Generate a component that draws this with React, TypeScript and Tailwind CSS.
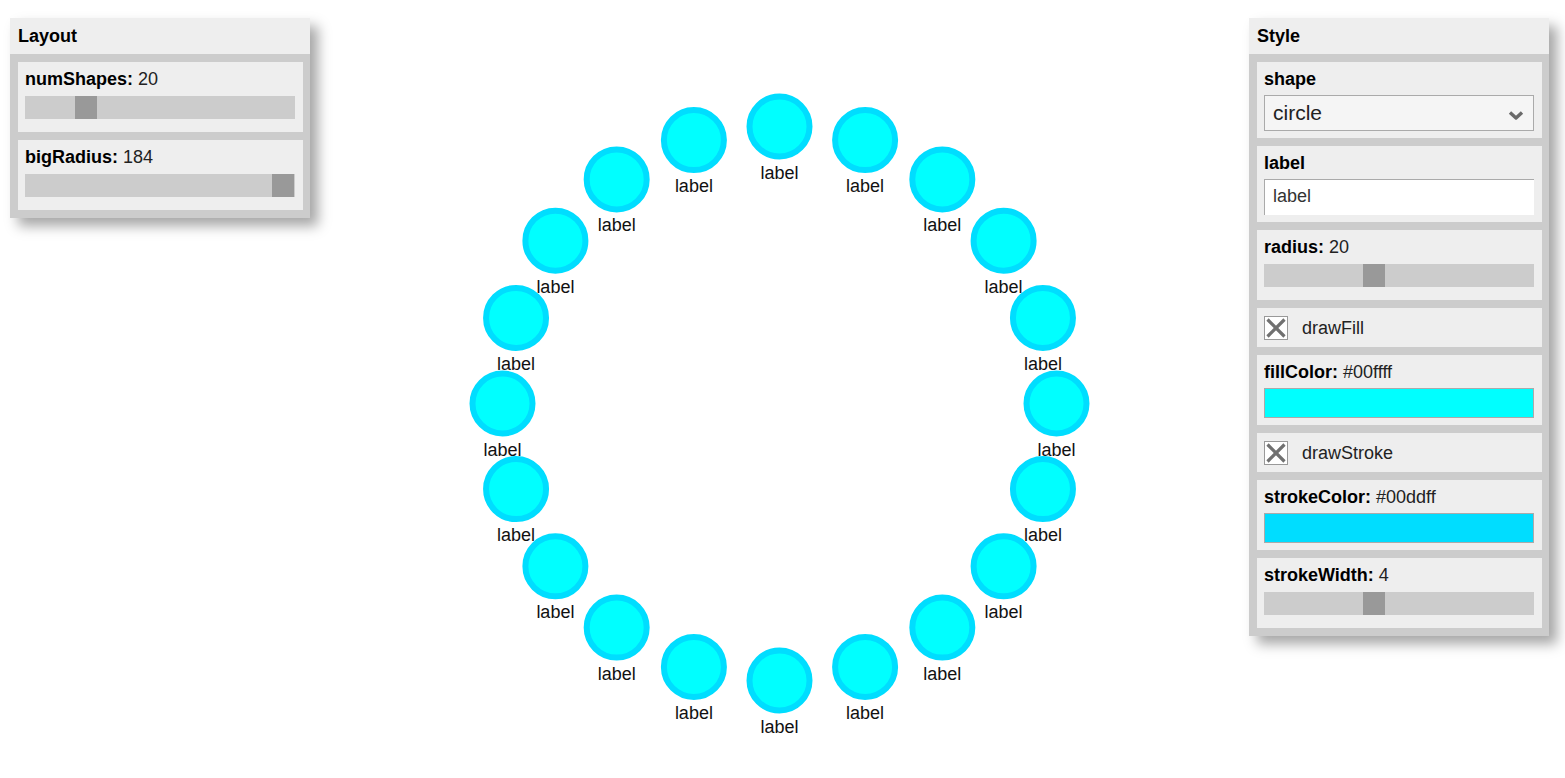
import { useState, type ReactNode } from "react";

const SCALE = 1.5;
const CENTER_X = 330.5;
const CENTER_Y = 385.5;
const LABEL_GAP = 22;

function Panel({ title, children }: { title: string; children: ReactNode }) {
  return (
    <section className="w-[300px] shrink-0 bg-[#cccccc] shadow-[8px_8px_12px_rgba(0,0,0,0.35)]">
      <h2 className="h-9 bg-[#eeeeee] px-2 text-lg leading-9 font-bold">{title}</h2>
      <div className="flex flex-col gap-2 py-2 pr-[7px] pl-2">{children}</div>
    </section>
  );
}

function Field({ id, name, value, children }: { id: string; name: string; value?: string; children: ReactNode }) {
  return (
    <div className="flex flex-col bg-[#eeeeee] pt-1.5 pr-2 pb-[7px] pl-[7px]">
      <label htmlFor={id} className="mb-[5px] block text-lg leading-[22px]">
        <b>{value === undefined ? name : name + ":"}</b>
        {value !== undefined && <span className="text-[#222222]"> {value}</span>}
      </label>
      {children}
    </div>
  );
}

interface RangeProps {
  name: string;
  value: number;
  max: number;
  onChange: (value: number) => void;
}

function RangeField({ name, value, max, onChange }: RangeProps) {
  return (
    <Field id={name} name={name} value={String(value)}>
      <input
        id={name}
        type="range"
        min={0}
        max={max}
        value={value}
        onChange={(e) => onChange(Number(e.target.value))}
        className="mt-px mb-1.5 block h-[23px] w-full appearance-none bg-[#cccccc] [&::-webkit-slider-thumb]:h-[23px] [&::-webkit-slider-thumb]:w-[22px] [&::-webkit-slider-thumb]:appearance-none [&::-webkit-slider-thumb]:bg-[#999999]"
      />
    </Field>
  );
}

interface ColorProps {
  name: string;
  value: string;
  onChange: (value: string) => void;
}

function ColorField({ name, value, onChange }: ColorProps) {
  return (
    <Field id={name} name={name} value={value}>
      <input
        id={name}
        type="color"
        value={value}
        onChange={(e) => onChange(e.target.value)}
        className="block h-[30px] w-full appearance-none border border-[#aaaaaa] p-0 [&::-webkit-color-swatch]:rounded-none [&::-webkit-color-swatch]:border-0 [&::-webkit-color-swatch-wrapper]:p-0"
      />
    </Field>
  );
}

interface CheckProps {
  name: string;
  checked: boolean;
  onChange: (checked: boolean) => void;
}

function CheckField({ name, checked, onChange }: CheckProps) {
  return (
    <label className="flex h-[39px] items-center bg-[#eeeeee] px-[7px] text-lg text-[#222222]">
      <span className="grid">
        <input
          type="checkbox"
          checked={checked}
          onChange={(e) => onChange(e.target.checked)}
          className="col-start-1 row-start-1 size-6 appearance-none border border-[#999999] bg-white"
        />
        {checked && (
          <svg viewBox="0 0 24 24" className="pointer-events-none col-start-1 row-start-1 size-6" aria-hidden="true">
            <path d="M3.5 3.5 20.5 20.5M20.5 3.5 3.5 20.5" stroke="#707070" strokeWidth="3.2" fill="none" />
          </svg>
        )}
      </span>
      <span className="ml-3.5">{name}</span>
    </label>
  );
}

export default function App() {
  const [numShapes, setNumShapes] = useState(20);
  const [bigRadius, setBigRadius] = useState(184);
  const [shape, setShape] = useState("circle");
  const [label, setLabel] = useState("label");
  const [radius, setRadius] = useState(20);
  const [drawFill, setDrawFill] = useState(true);
  const [fillColor, setFillColor] = useState("#00ffff");
  const [drawStroke, setDrawStroke] = useState(true);
  const [strokeColor, setStrokeColor] = useState("#00ddff");
  const [strokeWidth, setStrokeWidth] = useState(4);

  const ringRadius = bigRadius * SCALE + 1;
  const r = radius * SCALE;
  const paint = {
    fill: drawFill ? fillColor : "none",
    stroke: drawStroke ? strokeColor : "none",
    strokeWidth: strokeWidth * SCALE,
  };

  return (
    <div className="flex min-h-screen items-start bg-white pt-[18px] pr-4 pl-2.5 font-['Liberation_Sans',Arial,sans-serif] text-black">
      <Panel title="Layout">
        <RangeField name="numShapes" value={numShapes} max={99} onChange={setNumShapes} />
        <RangeField name="bigRadius" value={bigRadius} max={185} onChange={setBigRadius} />
      </Panel>

      <main className="flex min-w-0 flex-1 justify-center">
        <svg width="661" height="760" viewBox="0 0 661 760" className="block max-w-full">
          {Array.from({ length: numShapes }, (_, i) => {
            const angle = (i / numShapes) * Math.PI * 2;
            const x = CENTER_X + Math.cos(angle) * ringRadius;
            const y = CENTER_Y + Math.sin(angle) * ringRadius;
            return (
              <g key={i}>
                {shape === "circle" ? (
                  <circle cx={x} cy={y} r={r} {...paint} />
                ) : (
                  <rect x={x - r} y={y - r} width={r * 2} height={r * 2} {...paint} />
                )}
                <text x={x} y={y + r + LABEL_GAP} textAnchor="middle" className="fill-[#111111] text-lg">
                  {label}
                </text>
              </g>
            );
          })}
        </svg>
      </main>

      <Panel title="Style">
        <Field id="shape" name="shape">
          <div className="relative">
            <select
              id="shape"
              value={shape}
              onChange={(e) => setShape(e.target.value)}
              className="block h-9 w-full appearance-none border border-[#aaaaaa] bg-[#f5f5f5] px-2 text-[21px] leading-[34px] text-[#222222]"
            >
              <option value="circle">circle</option>
              <option value="square">square</option>
            </select>
            <svg viewBox="0 0 16 10" className="pointer-events-none absolute top-[15px] right-2.5 h-2.5 w-4" aria-hidden="true">
              <path d="M2 2.5 8 8 14 2.5" stroke="#6a6a6a" strokeWidth="3.4" strokeLinejoin="round" fill="none" />
            </svg>
          </div>
        </Field>
        <Field id="label" name="label">
          <input
            id="label"
            type="text"
            value={label}
            onChange={(e) => setLabel(e.target.value)}
            className="block h-9 w-full border-t border-l border-[#aaaaaa] bg-white px-2 pb-0.5 text-lg text-[#333333]"
          />
        </Field>
        <RangeField name="radius" value={radius} max={50} onChange={setRadius} />
        <CheckField name="drawFill" checked={drawFill} onChange={setDrawFill} />
        <ColorField name="fillColor" value={fillColor} onChange={setFillColor} />
        <CheckField name="drawStroke" checked={drawStroke} onChange={setDrawStroke} />
        <ColorField name="strokeColor" value={strokeColor} onChange={setStrokeColor} />
        <RangeField name="strokeWidth" value={strokeWidth} max={10} onChange={setStrokeWidth} />
      </Panel>
    </div>
  );
}
